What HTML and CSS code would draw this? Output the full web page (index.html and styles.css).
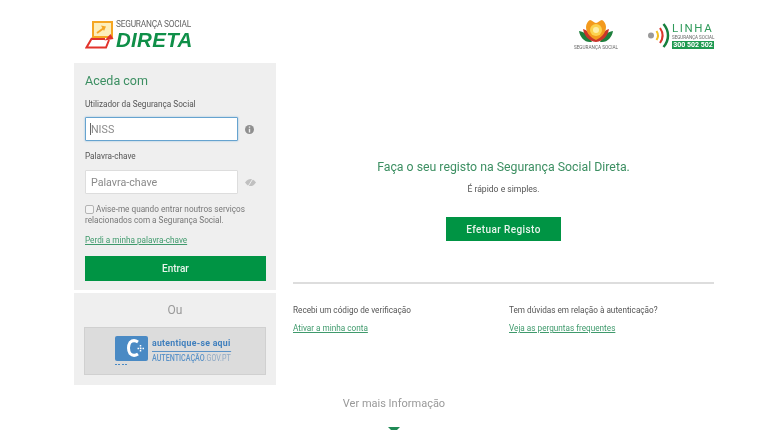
FILE: index.html
```html
<!DOCTYPE html>
<html lang="pt">
<head>
    <meta charset="UTF-8">
    <meta name="viewport" content="width=device-width, initial-scale=1.0">
    <title>Segurança Social Direta</title>
    <link rel="stylesheet" href="styles.css">
</head>
<body>
    <header class="header">
        <div class="brand">
            <svg class="brand-icon" width="29" height="28" viewBox="0 0 29 28">
                <rect x="8" y="1" width="19" height="15" fill="#fdeebb" stroke="#f5a623" stroke-width="2"/>
                <path d="M12 12l7-5" fill="none" stroke="#f5a623" stroke-width="2"/>
                <path d="M16 4.500l5 1-2 4.500z" fill="#f5a623"/>
                <path d="M7 17L1.500 26.500H21L24 19" fill="none" stroke="#e2332b" stroke-width="2"/>
                <path d="M7 18h13" stroke="#e2332b" stroke-width="2"/>
                <path d="M19.500 19.500L28.500 18l-3-5z" fill="#e2332b"/>
            </svg>
            <div class="brand-text">
                <span class="brand-top">SEGURANÇA SOCIAL</span>
                <span class="brand-name">DIRETA</span>
            </div>
        </div>
        <div class="partners">
            <div class="ss-logo">
                <svg width="34" height="22" viewBox="0 0 34 22">
                    <path d="M0 11c1 6 5 11 11 11h2C10 16 6 12 0 11zM34 11c-1 6-5 11-11 11h-2c3-6 7-10 13-11z" fill="#1d7f3c"/>
                    <path d="M4 9c1 6 5 12 13 13 8-1 12-7 13-13-3 1-5 2-6 5H10C9 11 7 10 4 9z" fill="#c8352b"/>
                    <path d="M7 7c0-3 2-6 4-7 2 0 4 3 6 3s4-3 6-3c2 1 4 4 4 7 0 6-5 11-10 13C12 18 7 13 7 7z" fill="#f39a1d"/>
                    <circle cx="17" cy="10" r="6" fill="#fbd24e"/>
                    <circle cx="17" cy="10" r="3" fill="#fdeea8"/>
                </svg>
                <span class="ss-text">SEGURANÇA SOCIAL</span>
            </div>
            <div class="linha">
                <svg width="23" height="25" viewBox="0 0 23 25">
                    <circle cx="4" cy="12.500" r="3" fill="#9a9a9a"/>
                    <path d="M9.500 8c2 3 2 6 0 9" fill="none" stroke="#f5c11f" stroke-width="2"/>
                    <path d="M13 5c3.500 5 3.500 10 0 15" fill="none" stroke="#d9362b" stroke-width="2"/>
                    <path d="M16.500 1c6 7 6 16 0 23" fill="none" stroke="#15803d" stroke-width="2.500"/>
                </svg>
                <div class="linha-text">
                    <span class="linha-name">LINHA</span>
                    <span class="linha-sub">SEGURANÇA SOCIAL</span>
                    <span class="linha-phone">300 502 502</span>
                </div>
            </div>
        </div>
    </header>

    <main class="content">
        <aside class="sidebar">
            <form class="login">
                <h2 class="login-title">Aceda com</h2>
                <label class="field-label">Utilizador da Segurança Social</label>
                <div class="field-row">
                    <input class="field field-focus" type="text" placeholder="NISS">
                    <svg class="field-icon" width="9" height="9" viewBox="0 0 9 9">
                        <circle cx="4.500" cy="4.500" r="4.500" fill="#8f8f8f"/>
                        <path d="M3.800 1.500h1.400v1.300H3.800zM3.800 3.700h1.400v3.800H3.800z" fill="#eee"/>
                    </svg>
                </div>
                <label class="field-label">Palavra-chave</label>
                <div class="field-row field-row-pass">
                    <input class="field" type="text" placeholder="Palavra-chave">
                    <svg class="field-icon" width="11" height="9" viewBox="0 0 11 9">
                        <path d="M0 4.500C2 1.500 4 1 5.500 1S9 1.500 11 4.500C9 7.500 7 8 5.500 8S2 7.500 0 4.500z" fill="#c0c0c0"/>
                        <path d="M8 .5L3 8.500" stroke="#eee" stroke-width="1"/>
                    </svg>
                </div>
                <p class="notify"><span class="checkbox"></span>Avise-me quando entrar noutros serviços relacionados com a Segurança Social.</p>
                <a class="link lost" href="#">Perdi a minha palavra-chave</a>
                <button class="btn btn-enter" type="button">Entrar</button>
            </form>
            <div class="alt-login">
                <div class="alt-title">Ou</div>
                <div class="gov-box">
                    <div class="gov-badge">
                        <svg width="33" height="25" viewBox="0 0 33 25">
                            <rect width="33" height="25" rx="2" fill="#4a8ac4"/>
                            <path d="M23 6c-3-2-6-1.500-8 .5-2 3-2 8 0 11 2 2 5 2.500 8 .5" fill="none" stroke="#fff" stroke-width="3"/>
                            <path d="M29 12.500h-7M25.500 9v7" stroke="#fff" stroke-width="1.500" stroke-dasharray="1.500 1"/>
                        </svg>
                        <span class="gov-dots"></span>
                    </div>
                    <div class="gov-text">
                        <span class="gov-top">autentique-se aqui</span>
                        <span class="gov-bottom"><b>AUTENTICAÇÃO</b>.GOV.PT</span>
                    </div>
                </div>
            </div>
        </aside>

        <section class="main-col">
            <div class="register">
                <h2 class="register-title">Faça o seu registo na Segurança Social Direta.</h2>
                <p class="register-sub">É rápido e simples.</p>
                <button class="btn btn-register" type="button">Efetuar Registo</button>
            </div>
            <div class="help">
                <div class="help-item">
                    <p class="help-text">Recebi um código de verificação</p>
                    <a class="link" href="#">Ativar a minha conta</a>
                </div>
                <div class="help-item">
                    <p class="help-text">Tem dúvidas em relação à autenticação?</p>
                    <a class="link" href="#">Veja as perguntas frequentes</a>
                </div>
            </div>
        </section>
    </main>

    <div class="more">
        <div class="more-text">Ver mais Informação</div>
        <span class="more-arrow"></span>
    </div>
</body>
</html>
```

FILE: styles.css
```css
* {
    box-sizing: border-box;
}
html, body {
    height: 430px;
    overflow: hidden;
}
body {
    margin: 0;
    font-family: Roboto, 'Liberation Sans', sans-serif;
    background: #fff;
    color: #555;
    filter: blur(0.4px);
}
.header {
    display: flex;
    justify-content: space-between;
    align-items: flex-start;
    height: 63px;
    padding: 20px 54px 0 85px;
}
.brand {
    display: flex;
    align-items: flex-start;
}
.brand-icon {
    flex: none;
    margin-top: 1px;
}
.brand-text {
    display: flex;
    flex-direction: column;
    margin-left: 2px;
}
.brand-top {
    font-size: 8.300px;
    line-height: 8px;
    color: #666;
    letter-spacing: -0.2px;
    white-space: nowrap;
}
.brand-name {
    margin-top: 2px;
    font-family: 'Liberation Sans', sans-serif;
    font-size: 20.500px;
    line-height: 20px;
    font-weight: 700;
    font-style: italic;
    color: #0f8f48;
    letter-spacing: 0.3px;
}
.partners {
    display: flex;
    align-items: flex-start;
}
.ss-logo {
    display: flex;
    flex-direction: column;
    align-items: center;
    width: 42px;
    margin-right: 30px;
}
.ss-text {
    font-size: 4.700px;
    line-height: 6px;
    margin-top: 3px;
    color: #666;
    white-space: nowrap;
}
.linha {
    display: flex;
    align-items: flex-start;
    margin-top: 3px;
}
.linha-text {
    display: flex;
    flex-direction: column;
    width: 42px;
    margin-left: 2px;
}
.linha-name {
    font-size: 11.500px;
    line-height: 11px;
    color: #2f9a5a;
    letter-spacing: 1.600px;
}
.linha-sub {
    margin-top: 1px;
    font-size: 4.500px;
    line-height: 6px;
    color: #666;
    white-space: nowrap;
}
.linha-phone {
    background: #1f9a50;
    color: #fff;
    font-size: 7px;
    line-height: 8px;
    font-weight: 700;
    text-align: center;
    white-space: nowrap;
}
.content {
    display: flex;
    align-items: flex-start;
    padding-left: 74px;
}
.sidebar {
    width: 202px;
    flex: none;
}
.login {
    background: #efefef;
    padding: 10px 10px 0 11px;
    height: 227px;
}
.login-title {
    margin: 0 0 9px;
    font-size: 12.500px;
    line-height: 16px;
    font-weight: 400;
    color: #3c8f62;
}
.field-label {
    display: block;
    font-size: 8.200px;
    line-height: 12px;
    color: #555;
}
.field-row {
    display: flex;
    align-items: center;
    margin: 7px 0 9px;
}
.field-row-pass {
    margin: 8px 0 10px;
}
.field {
    width: 153px;
    height: 24px;
    padding: 0 5px;
    border: 1px solid #ddd;
    border-radius: 1px;
    background: #fff;
    font-family: inherit;
    font-size: 10.700px;
    outline: none;
}
.field::placeholder {
    color: #8a8a8a;
}
.field-focus {
    border-color: #66a3cf;
    box-shadow: 0 0 2px #8bb9dc;
    background: linear-gradient(#666, #666) 4px center / 1px 12px no-repeat, #fff;
}
.field-icon {
    margin-left: 7px;
}
.notify {
    margin: 0;
    font-size: 8.200px;
    line-height: 11px;
    color: #777;
}
.checkbox {
    display: inline-block;
    width: 9px;
    height: 9px;
    margin-right: 2px;
    border: 1px solid #b4b4b4;
    border-radius: 2px;
    background: #f4f4f4;
    vertical-align: -2px;
}
.link {
    display: block;
    font-size: 8.200px;
    line-height: 12px;
    color: #3f9a6c;
    text-decoration: underline;
}
.lost {
    margin-top: 8px;
}
.btn {
    display: block;
    border: none;
    background: #009444;
    color: #e8f5ec;
    font-family: inherit;
    font-weight: 500;
}
.btn-enter {
    width: 181px;
    height: 25px;
    margin-top: 10px;
    font-size: 10px;
}
.alt-login {
    margin-top: 3px;
    height: 92px;
    padding: 10px 10px 0 10px;
    background: #efefef;
}
.alt-title {
    text-align: center;
    font-size: 12px;
    line-height: 14px;
    color: #999;
}
.gov-box {
    display: flex;
    align-items: flex-start;
    width: 182px;
    height: 48px;
    margin-top: 10px;
    padding: 8px 0 0 30px;
    background: #dcdcdc;
    border: 1px solid #d0d0d0;
}
.gov-badge {
    display: flex;
    flex-direction: column;
}
.gov-dots {
    width: 13px;
    height: 1px;
    margin-top: 3px;
    background: repeating-linear-gradient(to right, #4a8ac4 0 2px, transparent 2px 3.500px);
}
.gov-text {
    display: flex;
    flex-direction: column;
    width: 79px;
    margin: 1px 0 0 4px;
}
/* the original badge uses a condensed face, so squeeze the text to its width */
.gov-top {
    flex: none;
    width: 86px;
    padding-bottom: 2px;
    border-bottom: 1px solid #5b93c8;
    font-size: 9.500px;
    line-height: 12px;
    font-weight: 700;
    color: #3f7fbd;
    letter-spacing: 0.3px;
    white-space: nowrap;
    transform: scaleX(0.92);
    transform-origin: left;
}
.gov-bottom {
    flex: none;
    width: 94px;
    font-size: 8.500px;
    line-height: 13px;
    color: #8fa9c4;
    white-space: nowrap;
    transform: scaleX(0.84);
    transform-origin: left;
}
.gov-bottom b {
    color: #5b93c8;
    font-weight: 500;
}
.main-col {
    width: 421px;
    margin-left: 17px;
}
.register {
    height: 221px;
    padding-top: 95px;
    border-bottom: 2px solid #ddd;
    text-align: center;
}
.register-title {
    margin: 0;
    font-size: 12.300px;
    line-height: 18px;
    font-weight: 400;
    color: #3c8f62;
}
.register-sub {
    margin: 7px 0 0;
    font-size: 8.600px;
    line-height: 12px;
    color: #555;
}
.btn-register {
    width: 115px;
    height: 24px;
    margin: 22px auto 0;
    font-size: 10px;
    letter-spacing: 0.4px;
}
.help {
    display: grid;
    grid-template-columns: 216px 1fr;
    padding-top: 20px;
}
.help-text {
    margin: 0 0 6px;
    font-size: 8.200px;
    line-height: 12px;
    color: #555;
}
.more {
    display: flex;
    flex-direction: column;
    align-items: center;
    width: 140px;
    margin: 12px 0 0 324px;
}
.more-text {
    font-size: 11px;
    line-height: 14px;
    color: #999;
    white-space: nowrap;
}
.more-arrow {
    width: 0;
    height: 0;
    margin-top: 16px;
    border-left: 6px solid transparent;
    border-right: 6px solid transparent;
    border-top: 6px solid #1f8a55;
}
```
